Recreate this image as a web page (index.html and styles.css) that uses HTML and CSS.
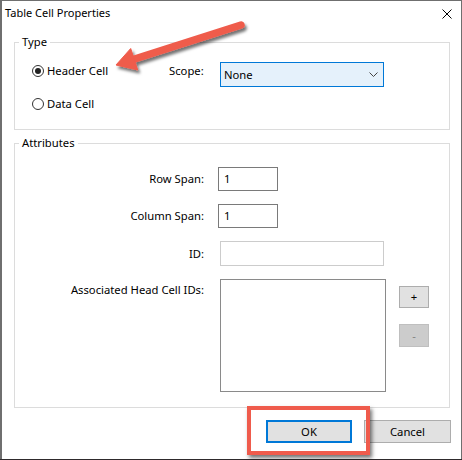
FILE: index.html
```html
<!DOCTYPE html>
<html>
<head>
<meta charset="utf-8">
<title>Table Cell Properties</title>
<link rel="stylesheet" href="styles.css">
</head>
<body>
<div class="window">
  <div class="titlebar">
    <span class="title">Table Cell Properties</span>
    <svg class="close" width="10" height="10" viewBox="0 0 10 10"><path d="M0.5 0.5 L9.5 9.5 M9.5 0.5 L0.5 9.5" stroke="#000" stroke-width="1" fill="none"/></svg>
  </div>
  <div class="content">
    <fieldset class="group group-type">
      <legend>Type</legend>
      <div class="type-row">
        <label class="radio"><span class="radio-dot checked"></span>Header Cell</label>
        <span class="scope-label">Scope:</span>
        <div class="select"><span>None</span><svg width="9" height="5" viewBox="0 0 9 5"><path d="M0.5 0.5 L4.5 4.5 L8.5 0.5" stroke="#444" stroke-width="1" fill="none"/></svg></div>
      </div>
      <div class="type-row">
        <label class="radio"><span class="radio-dot"></span>Data Cell</label>
      </div>
    </fieldset>
    <fieldset class="group group-attr">
      <legend>Attributes</legend>
      <div class="attr-grid">
        <span class="lbl">Row Span:</span>
        <div class="field field-span">1</div>
        <span class="lbl">Column Span:</span>
        <div class="field field-span">1</div>
        <span class="lbl">ID:</span>
        <div class="field field-id"></div>
        <span class="lbl lbl-top">Associated Head Cell IDs:</span>
        <div class="list-row">
          <div class="listbox"></div>
          <div class="list-buttons">
            <div class="small-btn">+</div>
            <div class="small-btn disabled">-</div>
          </div>
        </div>
      </div>
    </fieldset>
    <div class="buttons">
      <div class="btn btn-default">OK</div>
      <div class="btn btn-cancel">Cancel</div>
    </div>
  </div>
</div>
<svg class="arrow" width="462" height="460" viewBox="0 0 462 460">
  <defs>
    <filter id="sh" x="-20%" y="-20%" width="140%" height="160%">
      <feDropShadow dx="2" dy="3" stdDeviation="1.6" flood-color="#000" flood-opacity="0.55"/>
    </filter>
  </defs>
  <g filter="url(#sh)" fill="#ef5b4c" stroke="#ef5b4c">
    <line x1="241" y1="25" x2="133" y2="59.5" stroke-width="7.5" stroke-linecap="round"/>
    <polygon points="116,65 130.7,48.5 137.7,70" stroke-width="1" stroke-linejoin="round"/>
  </g>
</svg>
<div class="highlight"></div>
</body>
</html>
```

FILE: styles.css
```css
* {
  box-sizing: border-box;
}

html,
body {
  margin: 0;
  padding: 0;
}

body {
  width: 462px;
  height: 460px;
  overflow: hidden;
  background: #2e2a2c;
  font-family: "Noto Sans", "Liberation Sans", sans-serif;
  font-size: 11.25px;
  color: #000;
}

.window {
  width: 462px;
  height: 459px;
  background: #fff;
  border: 1px solid #6f6f6f;
  border-left-width: 2px;
  border-bottom: none;
}

.titlebar {
  display: flex;
  justify-content: space-between;
  align-items: flex-start;
  height: 29px;
  padding: 4px 9px 0 3px;
}

.title {
  font-size: 11px;
  line-height: 16px;
}

.close {
  margin-top: 4px;
}

.content {
  padding: 0 11px 0 12px;
}

.group {
  margin: 0;
  padding: 0;
  min-width: 0;
  border: 1px solid #dcdcdc;
}

.group legend {
  margin-left: 4px;
  padding: 0 3px;
  line-height: 16px;
}

.group-type {
  margin-top: 4px;
  padding-top: 12px;
  padding-bottom: 16px;
}

.type-row {
  display: flex;
  align-items: flex-start;
  padding-left: 17px;
}

.type-row + .type-row {
  margin-top: 8px;
}

.radio {
  display: flex;
  align-items: center;
  gap: 3px;
  width: 137px;
  line-height: 18px;
}

.radio-dot {
  display: flex;
  align-items: center;
  justify-content: center;
  width: 12px;
  height: 12px;
  border: 1px solid #333;
  border-radius: 50%;
}

.radio-dot.checked::after {
  content: "";
  width: 6px;
  height: 6px;
  border-radius: 50%;
  background: #222;
}

.scope-label {
  width: 51px;
  line-height: 18px;
}

.select {
  display: flex;
  align-items: center;
  justify-content: space-between;
  width: 164px;
  height: 25px;
  padding: 0 5px 0 3px;
  border: 1px solid #0078d7;
  background: #e5f1fb;
}

.group-attr {
  margin-top: 5px;
  padding-top: 16px;
  padding-bottom: 15px;
}

.attr-grid {
  display: grid;
  grid-template-columns: 189px 1fr;
  column-gap: 14px;
  row-gap: 13px;
  align-items: center;
}

.lbl {
  text-align: right;
  line-height: 16px;
}

.lbl-top {
  align-self: start;
  padding-top: 3px;
}

.field {
  height: 24px;
  padding: 3px 5px;
  border: 1px solid #7a7a7a;
  line-height: 16px;
}

.field-span {
  width: 60px;
}

.field-id {
  width: 164px;
  height: 25px;
  margin-left: 2px;
  border-color: #cccccc;
}

.list-row {
  display: flex;
  gap: 13px;
  margin-left: 2px;
}

.listbox {
  width: 166px;
  height: 113px;
  border: 1px solid #8a8a8a;
}

.list-buttons {
  display: flex;
  flex-direction: column;
  gap: 16px;
  padding-top: 7px;
}

.small-btn {
  display: flex;
  align-items: center;
  justify-content: center;
  width: 30px;
  height: 22px;
  border: 1px solid #adadad;
  background: #e1e1e1;
  line-height: 16px;
}

.small-btn.disabled {
  height: 23px;
  border-color: #bfbfbf;
  background: #cccccc;
  color: #838383;
}

.buttons {
  display: flex;
  justify-content: flex-end;
  gap: 12px;
  margin-top: 12px;
  margin-right: -1px;
}

.btn {
  display: flex;
  align-items: center;
  justify-content: center;
  width: 86px;
  height: 23px;
  border: 1px solid #adadad;
  background: #e1e1e1;
  line-height: 16px;
}

.btn-default {
  border: 2px solid #0078d7;
}

.btn-cancel {
  width: 87px;
}

.arrow {
  position: absolute;
  left: 0;
  top: 0;
  pointer-events: none;
}

.highlight {
  position: absolute;
  left: 247px;
  top: 406px;
  width: 123px;
  height: 49px;
  border: 4px solid #ef5b4c;
  box-shadow: 2px 3px 4px rgba(0, 0, 0, 0.55);
  pointer-events: none;
}
```
